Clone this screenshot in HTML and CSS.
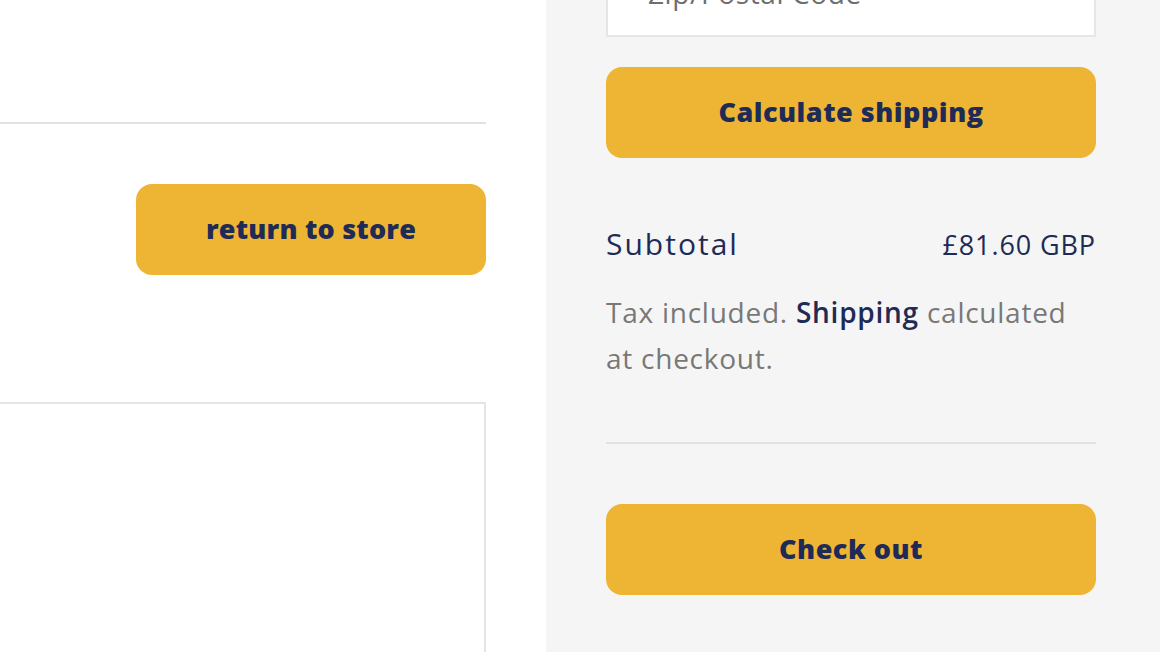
FILE: index.html
```html
<!DOCTYPE html>
<html lang="en">
<head>
<meta charset="utf-8">
<title>Cart</title>
<link rel="stylesheet" href="styles.css">
</head>
<body>
<div class="page">
  <main class="cart-main">
    <div class="cart-inner">
      <div class="spacer-top"></div>
      <hr class="rule">
      <div class="actions">
        <a class="btn btn-return" href="#">return to store</a>
      </div>
      <div class="note-box"></div>
    </div>
  </main>
  <aside class="summary">
    <div class="zip-field"><span class="placeholder">Zip/Postal Code</span></div>
    <button class="btn btn-block btn-calc">Calculate shipping</button>
    <div class="subtotal">
      <span class="subtotal-label">Subtotal</span>
      <span class="subtotal-value">£81.60 GBP</span>
    </div>
    <p class="tax-note">Tax included. <a href="#">Shipping</a> calculated at checkout.</p>
    <hr class="rule rule-summary">
    <button class="btn btn-block btn-checkout">Check out</button>
  </aside>
</div>
</body>
</html>
```

FILE: styles.css
```css
* { box-sizing: border-box; }
html, body { margin: 0; padding: 0; }
body {
  font-family: "Open Sans", "Noto Sans", sans-serif;
  background: #ffffff;
  color: #1e2b56;
  overflow: hidden;
}
.page {
  display: flex;
  height: 652px;
}
.cart-main {
  width: 546px;
  flex: none;
  background: #ffffff;
  padding-right: 60px;
  overflow: hidden;
}
.cart-inner {
  margin-left: -40px;
  display: flex;
  flex-direction: column;
}
.spacer-top { height: 122px; }
.rule {
  border: 0;
  border-top: 2px solid #e2e2e2;
  margin: 0;
}
.actions {
  display: flex;
  justify-content: flex-end;
  padding-top: 60px;
}
.btn {
  display: flex;
  align-items: center;
  justify-content: center;
  height: 91px;
  flex: none;
  border: 0;
  border-radius: 16px;
  background: #eeb534;
  color: #1e2b56;
  font-family: inherit;
  font-weight: 800;
  font-size: 27px;
  letter-spacing: 0.5px;
  text-decoration: none;
  padding: 0 0 3px;
}
.btn-return { width: 350px; letter-spacing: 0.2px; }
.note-box {
  margin-top: 127px;
  height: 300px;
  border: 2px solid #e5e5e5;
  background: #fff;
}
.summary {
  flex: 1;
  background: #f5f5f5;
  padding: 0 64px 0 60px;
  display: flex;
  flex-direction: column;
}
.zip-field {
  height: 37px;
  flex: none;
  background: #ffffff;
  border: 2px solid #e6e6e6;
  border-top: 0;
  position: relative;
  overflow: hidden;
}
.placeholder {
  position: absolute;
  left: 40px;
  bottom: 28px;
  font-size: 28px;
  letter-spacing: 0.6px;
  line-height: 1;
  font-weight: 500;
  color: #6e6e6e;
}
.btn-block { width: 100%; }
.btn-calc { margin-top: 30px; }
.subtotal {
  display: flex;
  justify-content: space-between;
  align-items: baseline;
  margin-top: 65px;
}
.subtotal-label { font-size: 30px; font-weight: 500; letter-spacing: 2px; }
.subtotal-value { font-size: 27px; font-weight: 500; letter-spacing: 0.9px; }
.tax-note {
  margin: 25px 0 0;
  font-size: 28px;
  line-height: 46px;
  font-weight: 500;
  letter-spacing: 0.75px;
  color: #787878;
}
.tax-note a {
  color: #1e2b56;
  text-decoration: none;
  font-weight: 600;
}
.rule-summary { margin-top: 61px; }
.btn-checkout { margin-top: 60px; }
```
